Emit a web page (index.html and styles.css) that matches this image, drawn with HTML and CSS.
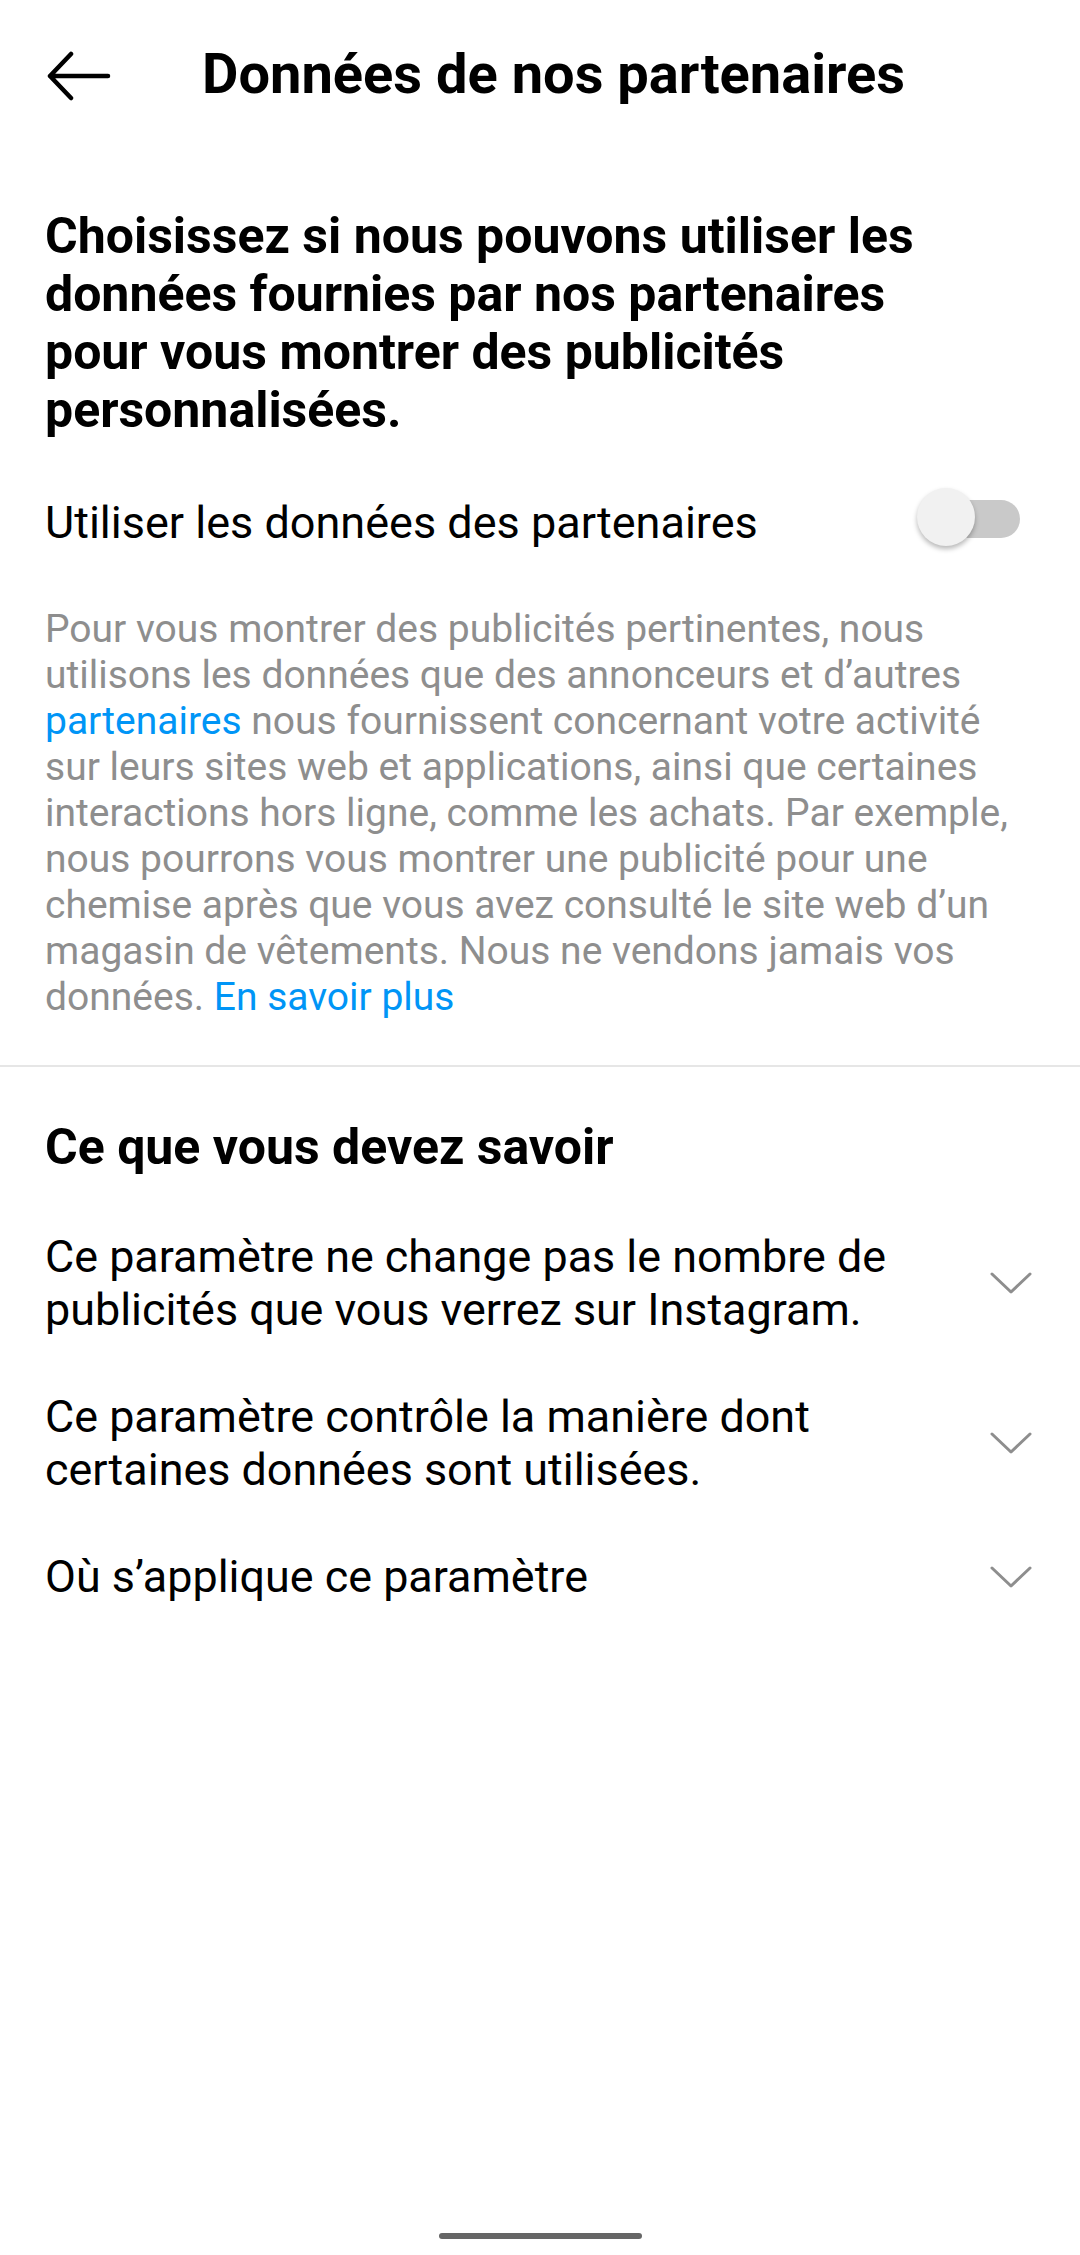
FILE: index.html
```html
<!DOCTYPE html>
<html lang="fr">
<head>
<meta charset="utf-8">
<title>Données de nos partenaires</title>
<link rel="stylesheet" href="styles.css">
</head>
<body>
<div class="page">
  <header class="topbar">
    <svg class="back" width="66" height="50" viewBox="0 0 66 50" aria-hidden="true">
      <path d="M4 25 H62 M25 3 L4 25 L25 47" fill="none" stroke="#000" stroke-width="4.5" stroke-linecap="round" stroke-linejoin="round"/>
    </svg>
    <h1 class="title">Données de nos partenaires</h1>
  </header>

  <main class="content">
    <section class="intro">
      <h2 class="heading">Choisissez si nous pouvons utiliser les<br>données fournies par nos partenaires<br>pour vous montrer des publicités<br>personnalisées.</h2>

      <div class="toggle-row">
        <span class="toggle-label">Utiliser les données des partenaires</span>
        <span class="switch">
          <span class="track"></span>
          <span class="knob"></span>
        </span>
      </div>

      <p class="desc">Pour vous montrer des publicités pertinentes, nous<br>utilisons les données que des annonceurs et d’autres<br><span class="link">partenaires</span> nous fournissent concernant votre activité<br>sur leurs sites web et applications, ainsi que certaines<br>interactions hors ligne, comme les achats. Par exemple,<br>nous pourrons vous montrer une publicité pour une<br>chemise après que vous avez consulté le site web d’un<br>magasin de vêtements. Nous ne vendons jamais vos<br>données. <span class="link">En savoir plus</span></p>
    </section>

    <div class="divider"></div>

    <section class="know">
      <h2 class="heading">Ce que vous devez savoir</h2>
      <ul class="items">
        <li class="item">
          <span class="item-text">Ce paramètre ne change pas le nombre de<br>publicités que vous verrez sur Instagram.</span>
          <svg class="chev" width="44" height="24" viewBox="0 0 44 24" aria-hidden="true"><path d="M3 3 L22 21 L41 3" fill="none" stroke="#8e8e8e" stroke-width="3" stroke-linecap="round" stroke-linejoin="round"/></svg>
        </li>
        <li class="item">
          <span class="item-text">Ce paramètre contrôle la manière dont<br>certaines données sont utilisées.</span>
          <svg class="chev" width="44" height="24" viewBox="0 0 44 24" aria-hidden="true"><path d="M3 3 L22 21 L41 3" fill="none" stroke="#8e8e8e" stroke-width="3" stroke-linecap="round" stroke-linejoin="round"/></svg>
        </li>
        <li class="item">
          <span class="item-text">Où s’applique ce paramètre</span>
          <svg class="chev" width="44" height="24" viewBox="0 0 44 24" aria-hidden="true"><path d="M3 3 L22 21 L41 3" fill="none" stroke="#8e8e8e" stroke-width="3" stroke-linecap="round" stroke-linejoin="round"/></svg>
        </li>
      </ul>
    </section>
  </main>

  <footer class="navbar">
    <span class="home-indicator"></span>
  </footer>
</div>
</body>
</html>
```

FILE: styles.css
```css
* {
  box-sizing: border-box;
}

html, body {
  margin: 0;
  padding: 0;
  background: #ffffff;
}

body {
  font-family: Roboto, "Noto Sans", "Liberation Sans", sans-serif;
  color: #000000;
}

.page {
  width: 1080px;
  min-height: 2255px;
  display: flex;
  flex-direction: column;
}

.topbar {
  height: 144px;
  display: flex;
  align-items: center;
  padding-left: 46px;
}

.back {
  display: block;
  margin-top: 8px;
  flex: none;
}

.title {
  margin: 0 0 0 90px;
  padding-top: 6px;
  font-size: 56px;
  font-weight: 700;
  line-height: 1.172;
  letter-spacing: 0;
}

.content {
  flex: 1;
}

.intro {
  padding: 63px 20px 0 45px;
}

.heading {
  margin: 0;
  font-size: 50px;
  font-weight: 700;
  line-height: 58px;
}

.toggle-row {
  height: 90px;
  margin-top: 33px;
  display: flex;
  align-items: center;
  justify-content: space-between;
  padding-right: 40px;
}

.toggle-label {
  font-size: 45px;
  line-height: 52px;
  padding-top: 11px;
}

.switch {
  position: relative;
  width: 103px;
  height: 58px;
  flex: none;
}

.track {
  position: absolute;
  right: 0;
  top: 12px;
  width: 89px;
  height: 38px;
  border-radius: 19px;
  background: #c9c9c9;
}

.knob {
  position: absolute;
  left: 0;
  top: 0;
  width: 58px;
  height: 58px;
  border-radius: 50%;
  background: #f1f1f1;
  box-shadow: 0 3px 5px rgba(0, 0, 0, 0.28);
}

.desc {
  margin: 44px 0 0 0;
  font-size: 39px;
  line-height: 46px;
  color: #8e8e8e;
  white-space: nowrap;
}

.link {
  color: #0095f6;
}

.divider {
  height: 2px;
  background: #e6e6e6;
  margin-top: 45px;
}

.know {
  padding: 51px 47px 0 45px;
}

.items {
  list-style: none;
  margin: 27px 0 0 0;
  padding: 0;
}

.item {
  display: flex;
  align-items: center;
  justify-content: space-between;
  padding: 27px 0;
}

.item-text {
  font-size: 44.9px;
  line-height: 53px;
  white-space: nowrap;
}

.chev {
  display: block;
  flex: none;
}

.navbar {
  height: 50px;
  display: flex;
  justify-content: center;
  padding-top: 28px;
}

.home-indicator {
  width: 203px;
  height: 6px;
  border-radius: 3px;
  background: #666666;
}
```
